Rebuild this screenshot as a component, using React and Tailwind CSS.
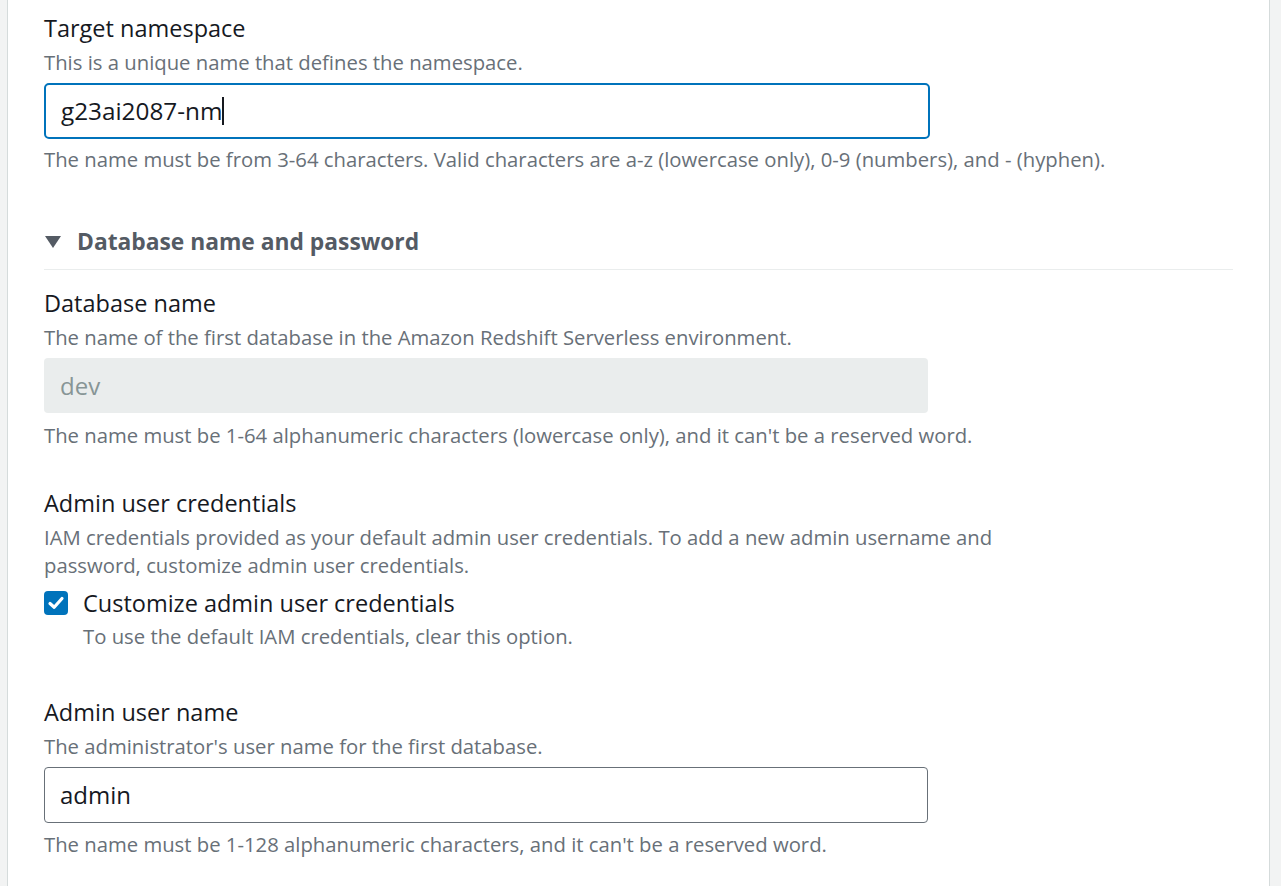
import React from "react";

const font = { fontFamily: '"Open Sans", "Noto Sans", sans-serif' };

function Label({ children }) {
  return <div className="text-[23.5px] leading-[28px] text-[#16191f]">{children}</div>;
}
function Desc({ children, className = "" }) {
  return <div className={"text-[20.3px] leading-[28px] text-[#687078] " + className}>{children}</div>;
}

export default function App() {
  return (
    <div style={font} className="w-[1281px] h-[886px] bg-[#f2f3f3] flex overflow-hidden">
      <div className="ml-[7px] w-[1263px] bg-white border-x border-[#d5dbdb] pl-[36px] pr-[36px] pt-[14px]">
        <Label>Target namespace</Label>
        <Desc className="mt-[6px]">This is a unique name that defines the namespace.</Desc>
        <div className="mt-[7px] w-[886px] h-[56px] rounded-[5px] border-2 border-[#0073bb] flex items-center pl-[15px] text-[24.3px] text-[#16191f]">
          g23ai2087-nm<span className="inline-block w-[2px] h-[28px] bg-[#16191f]"></span>
        </div>
        <Desc className="mt-[6px]">The name must be from 3-64 characters. Valid characters are a-z (lowercase only), 0-9 (numbers), and - (hyphen).</Desc>

        <div className="mt-[55px] flex items-center gap-[15px]">
          <svg width="18" height="14" viewBox="0 0 18 14"><path d="M1 1 H17 L9 13 Z" fill="#545b64" /></svg>
          <div className="text-[22.8px] font-bold text-[#545b64] leading-[28px]">Database name and password</div>
        </div>
        <div className="mt-[13px] w-[1189px] h-px bg-[#eaeded]"></div>

        <div className="mt-[19px]"><Label>Database name</Label></div>
        <Desc className="mt-[6px]">The name of the first database in the Amazon Redshift Serverless environment.</Desc>
        <div className="mt-[7px] w-[884px] h-[55px] rounded-[4px] bg-[#eaeded] flex items-center pl-[16px] text-[24px] text-[#879596]">dev</div>
        <Desc className="mt-[8px]">The name must be 1-64 alphanumeric characters (lowercase only), and it can't be a reserved word.</Desc>

        <div className="mt-[40px]"><Label>Admin user credentials</Label></div>
        <Desc className="mt-[6px]">IAM credentials provided as your default admin user credentials. To add a new admin username and<br />password, customize admin user credentials.</Desc>
        <div className="mt-[10px] flex items-center gap-[15px]">
          <div className="w-[24px] h-[24px] rounded-[4px] bg-[#0073bb] flex items-center justify-center">
            <svg width="20" height="20" viewBox="0 0 20 20"><path d="M4 10.5 L8.2 14.3 L16 5.5" fill="none" stroke="white" strokeWidth="3.2" strokeLinecap="round" strokeLinejoin="round" /></svg>
          </div>
          <div className="text-[23.5px] leading-[28px] text-[#16191f]">Customize admin user credentials</div>
        </div>
        <Desc className="mt-[5px] ml-[39px]">To use the default IAM credentials, clear this option.</Desc>

        <div className="mt-[48px]"><Label>Admin user name</Label></div>
        <Desc className="mt-[6px]">The administrator's user name for the first database.</Desc>
        <div className="mt-[7px] w-[884px] h-[56px] rounded-[4px] border border-[#687078] flex items-center pl-[15px] text-[24px] text-[#16191f]">admin</div>
        <Desc className="mt-[7px]">The name must be 1-128 alphanumeric characters, and it can't be a reserved word.</Desc>
      </div>
    </div>
  );
}
